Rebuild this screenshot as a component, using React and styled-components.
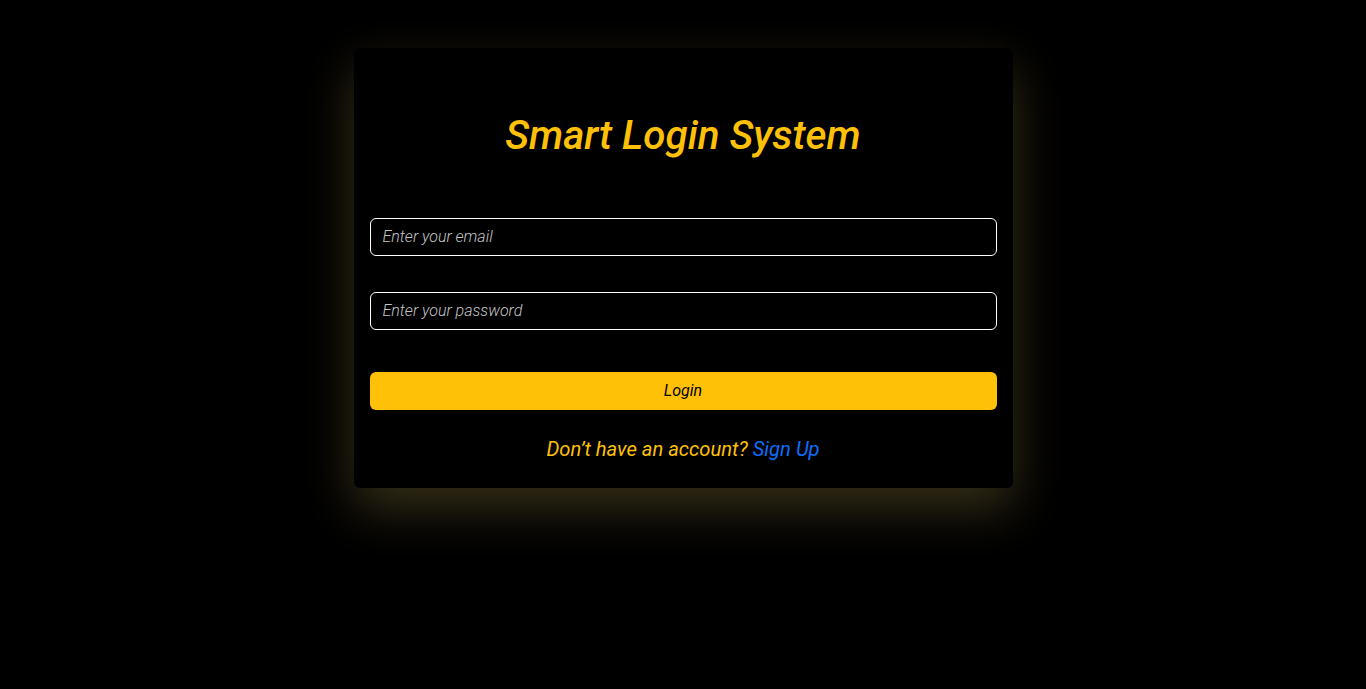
import React from 'react';
import styled, { createGlobalStyle } from 'styled-components';

const GlobalStyle = createGlobalStyle`
  html, body {
    margin: 0;
    padding: 0;
    background: #000;
    font-family: Roboto, "Liberation Sans", sans-serif;
    font-style: italic;
  }
`;

const Page = styled.main`
  min-height: 689px;
  padding-top: 48px;
  box-sizing: border-box;
  display: flex;
  justify-content: center;
  align-items: flex-start;
`;

const Card = styled.div`
  width: 659px;
  box-sizing: border-box;
  padding: 0 16px 26px;
  background: #000;
  border-radius: 6px;
  box-shadow: 0 20px 50px rgba(225, 200, 100, 0.24);
`;

const Title = styled.h1`
  margin: 0;
  padding: 64px 0 58px;
  text-align: center;
  color: #ffc107;
  font-size: 40.4px;
  font-weight: 500;
  line-height: 48px;
`;

const Form = styled.form`
  display: flex;
  flex-direction: column;
`;

const Input = styled.input`
  height: 38px;
  box-sizing: border-box;
  margin-bottom: ${({ $gap }) => $gap}px;
  padding: 0 12px 2px;
  background: #000;
  border: 1px solid #fff;
  border-radius: 6px;
  color: #fff;
  font-family: Roboto, "Liberation Sans", sans-serif;
  font-style: italic;
  font-weight: 300;
  font-size: 16px;
  outline: none;

  &::placeholder {
    color: #c4c4c4;
  }
`;

const Button = styled.button`
  height: 38px;
  padding: 0 0 2px;
  border: 0;
  border-radius: 6px;
  background: #ffc107;
  color: #000;
  font-family: Roboto, "Liberation Sans", sans-serif;
  font-style: italic;
  font-size: 16px;
  cursor: pointer;
`;

const Footer = styled.p`
  margin: 27px 0 0;
  padding-bottom: 1px;
  text-align: center;
  color: #ffc107;
  font-size: 20.2px;
  line-height: 24px;

  a {
    color: #0d6efd;
    text-decoration: none;
  }
`;

const App = () => (
  <>
    <GlobalStyle />
    <Page>
      <Card>
        <Title>Smart Login System</Title>
        <Form onSubmit={(e) => e.preventDefault()}>
          <Input type="email" placeholder="Enter your email" $gap={36} />
          <Input type="password" placeholder="Enter your password" $gap={42} />
          <Button type="submit">Login</Button>
        </Form>
        <Footer>
          Don’t have an account? <a href="#signup">Sign Up</a>
        </Footer>
      </Card>
    </Page>
  </>
);

export default App;
